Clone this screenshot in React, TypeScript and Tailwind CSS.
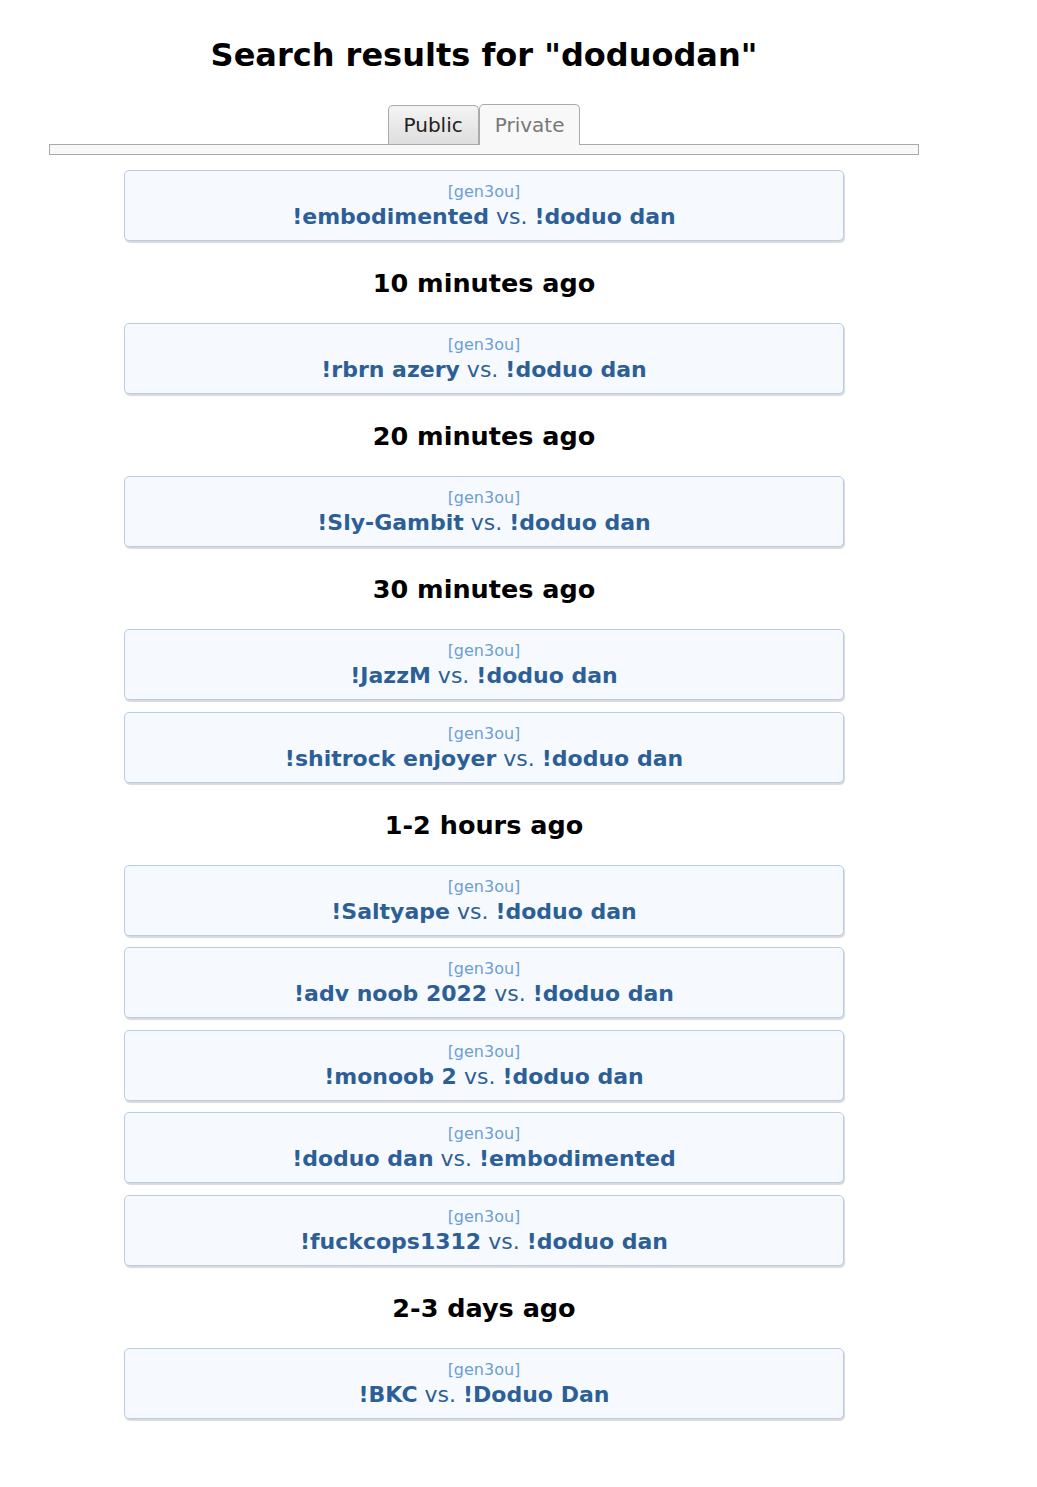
import React from 'react';

type Battle = { p1: string; p2: string };
type Group = { label?: string; battles: Battle[] };

const groups: Group[] = [
  { battles: [{ p1: '!embodimented', p2: '!doduo dan' }] },
  { label: '10 minutes ago', battles: [{ p1: '!rbrn azery', p2: '!doduo dan' }] },
  { label: '20 minutes ago', battles: [{ p1: '!Sly-Gambit', p2: '!doduo dan' }] },
  {
    label: '30 minutes ago',
    battles: [
      { p1: '!JazzM', p2: '!doduo dan' },
      { p1: '!shitrock enjoyer', p2: '!doduo dan' },
    ],
  },
  {
    label: '1-2 hours ago',
    battles: [
      { p1: '!Saltyape', p2: '!doduo dan' },
      { p1: '!adv noob 2022', p2: '!doduo dan' },
      { p1: '!monoob 2', p2: '!doduo dan' },
      { p1: '!doduo dan', p2: '!embodimented' },
      { p1: '!fuckcops1312', p2: '!doduo dan' },
    ],
  },
  { label: '2-3 days ago', battles: [{ p1: '!BKC', p2: '!Doduo Dan' }] },
];

function BattleCard({ battle }: { battle: Battle }) {
  return (
    <div className="w-[720px] h-[71px] rounded-[5px] border border-[#b8cde2] bg-[#f6faff] shadow-[1px_2px_1px_rgba(0,0,0,0.15)] flex flex-col items-center pt-[10px]">
      <div className="text-[16px] leading-[22px] text-[#6c9ed6]">[gen3ou]</div>
      <div className="text-[22px] leading-[28px] text-[#2d5f96]">
        <strong>{battle.p1}</strong> vs. <strong>{battle.p2}</strong>
      </div>
    </div>
  );
}

export default function App() {
  return (
    <div className="w-[968px] bg-white pt-[32px] pb-[60px] font-['DejaVu_Sans',Verdana,sans-serif] text-black">
      <h1 className="text-center text-[32px] font-bold leading-[46px]">Search results for "doduodan"</h1>

      <div className="mt-[26px] flex justify-center items-end">
        <div className="h-[39px] px-[15px] flex items-center rounded-t-[5px] border border-b-0 border-[#aaa] bg-gradient-to-b from-[#f4f4f4] to-[#dedede] text-[20px] text-[#222]">
          Public
        </div>
        <div className="h-[41px] px-[15px] flex items-center rounded-t-[5px] border border-b-0 border-[#aaa] bg-[#f8f8f8] text-[20px] text-[#777] relative z-10 -mb-px">
          Private
        </div>
      </div>
      <div className="ml-[49px] w-[870px] h-[11px] border border-[#aaa] bg-[#f8f8f8]" />

      <div className="flex flex-col items-center mt-[15px]">
        {groups.map((g, i) => (
          <div key={i} className="flex flex-col items-center">
            {g.label && (
              <h2 className="text-[25.5px] font-bold leading-[34px] mt-[25px] mb-[23px]">{g.label}</h2>
            )}
            <div className="flex flex-col gap-[11.5px]">
              {g.battles.map((b, j) => (
                <BattleCard key={j} battle={b} />
              ))}
            </div>
          </div>
        ))}
      </div>
    </div>
  );
}
